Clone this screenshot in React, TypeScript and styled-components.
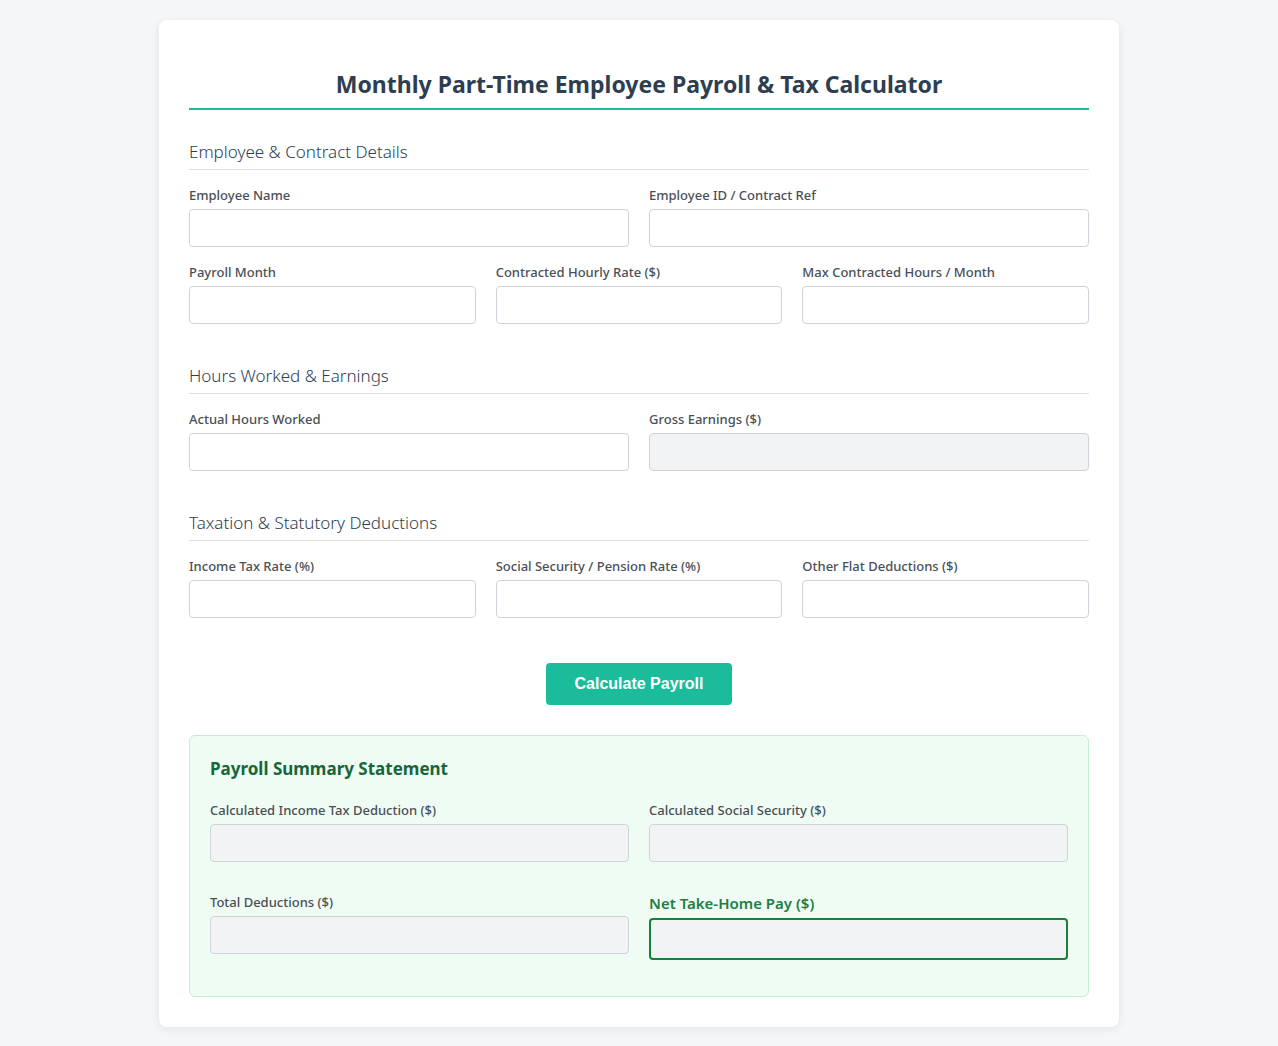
import styled, { createGlobalStyle } from 'styled-components';

const GlobalStyle = createGlobalStyle`
  * {
    box-sizing: border-box;
  }

  body {
    margin: 0;
    background-color: #f4f6f8;
    font-family: "Noto Sans", "Open Sans", sans-serif;
    color: #333333;
  }
`;

const Page = styled.div`
  padding: 20px 0;
  display: flex;
  justify-content: center;
`;

const Card = styled.div`
  width: 960px;
  background: #ffffff;
  border-radius: 8px;
  box-shadow: 0 2px 10px rgba(0, 0, 0, 0.08);
  padding: 49px 30px 30px;
`;

const Title = styled.h1`
  margin: 0 0 30px;
  padding-bottom: 8px;
  border-bottom: 2px solid #1abc9c;
  text-align: center;
  font-size: 23px;
  line-height: 31px;
  font-weight: 700;
  color: #2c3e50;
`;

const Section = styled.section`
  margin-bottom: 40px;
`;

const SectionTitle = styled.h2`
  margin: 0 0 16px;
  padding-bottom: 5px;
  border-bottom: 1px solid #dcdfe4;
  font-size: 17px;
  line-height: 24px;
  font-weight: 300;
  color: #2c3e50;
`;

const Row = styled.div<{ $cols: number }>`
  display: grid;
  grid-template-columns: repeat(${(p) => p.$cols}, 1fr);
  column-gap: 20px;
  row-gap: 16px;
  margin-bottom: 16px;

  &:last-child {
    margin-bottom: 0;
  }
`;

const Field = styled.div`
  display: flex;
  flex-direction: column;
`;

const Label = styled.label<{ $accent?: boolean }>`
  display: block;
  margin-bottom: ${(p) => (p.$accent ? '4px' : '5px')};
  font-size: ${(p) => (p.$accent ? '15px' : '13px')};
  line-height: ${(p) => (p.$accent ? '21px' : '18px')};
  font-weight: ${(p) => (p.$accent ? 600 : 500)};
  color: ${(p) => (p.$accent ? '#1e7e44' : '#4a4f57')};
`;

const Input = styled.input<{ $accent?: boolean }>`
  width: 100%;
  height: ${(p) => (p.$accent ? '42px' : '38px')};
  padding: 0 10px;
  border: ${(p) => (p.$accent ? '2px solid #1a7f3c' : '1px solid #cfd3d9')};
  border-radius: 4px;
  background: ${(p) => (p.$accent || p.readOnly ? '#f2f3f5' : '#ffffff')};
  font-family: inherit;
  font-size: 14px;
  outline: none;
`;

const Actions = styled.div`
  display: flex;
  justify-content: center;
  margin: 45px 0 30px;
`;

const CalcButton = styled.button`
  height: 42px;
  padding: 0 29px;
  border: none;
  border-radius: 4px;
  background: #1abc9c;
  color: #ffffff;
  font-family: "Liberation Sans", Arial, sans-serif;
  font-size: 16px;
  font-weight: 700;
  cursor: pointer;
`;

const Summary = styled.div`
  padding: 20px 20px 21px;
  background: #effcf3;
  border: 1px solid #c2f0d2;
  border-radius: 6px;
`;

const SummaryTitle = styled.h3`
  margin: 0 0 20px;
  font-size: 17px;
  line-height: 25px;
  font-weight: 700;
  color: #17663a;
`;

const SummaryGrid = styled.div`
  display: grid;
  grid-template-columns: 1fr 1fr;
  column-gap: 20px;
  row-gap: 16px;
  align-items: start;

  ${Field} {
    margin-bottom: 15px;
  }
`;

type FieldSpec = { label: string; readOnly?: boolean };

const employee: FieldSpec[] = [{ label: 'Employee Name' }, { label: 'Employee ID / Contract Ref' }];
const contract: FieldSpec[] = [
  { label: 'Payroll Month' },
  { label: 'Contracted Hourly Rate ($)' },
  { label: 'Max Contracted Hours / Month' },
];
const hours: FieldSpec[] = [{ label: 'Actual Hours Worked' }, { label: 'Gross Earnings ($)', readOnly: true }];
const deductions: FieldSpec[] = [
  { label: 'Income Tax Rate (%)' },
  { label: 'Social Security / Pension Rate (%)' },
  { label: 'Other Flat Deductions ($)' },
];

const renderRow = (fields: FieldSpec[]) => (
  <Row $cols={fields.length}>
    {fields.map((f) => (
      <Field key={f.label}>
        <Label>{f.label}</Label>
        <Input type="text" readOnly={f.readOnly} />
      </Field>
    ))}
  </Row>
);

const App = () => {
  return (
    <>
      <GlobalStyle />
      <Page>
        <Card>
          <Title>Monthly Part-Time Employee Payroll &amp; Tax Calculator</Title>

          <Section>
            <SectionTitle>Employee &amp; Contract Details</SectionTitle>
            {renderRow(employee)}
            {renderRow(contract)}
          </Section>

          <Section>
            <SectionTitle>Hours Worked &amp; Earnings</SectionTitle>
            {renderRow(hours)}
          </Section>

          <Section>
            <SectionTitle>Taxation &amp; Statutory Deductions</SectionTitle>
            {renderRow(deductions)}
          </Section>

          <Actions>
            <CalcButton type="button">Calculate Payroll</CalcButton>
          </Actions>

          <Summary>
            <SummaryTitle>Payroll Summary Statement</SummaryTitle>
            <SummaryGrid>
              <Field>
                <Label>Calculated Income Tax Deduction ($)</Label>
                <Input type="text" readOnly />
              </Field>
              <Field>
                <Label>Calculated Social Security ($)</Label>
                <Input type="text" readOnly />
              </Field>
              <Field>
                <Label>Total Deductions ($)</Label>
                <Input type="text" readOnly />
              </Field>
              <Field>
                <Label $accent>Net Take-Home Pay ($)</Label>
                <Input type="text" readOnly $accent />
              </Field>
            </SummaryGrid>
          </Summary>
        </Card>
      </Page>
    </>
  );
};

export default App;
